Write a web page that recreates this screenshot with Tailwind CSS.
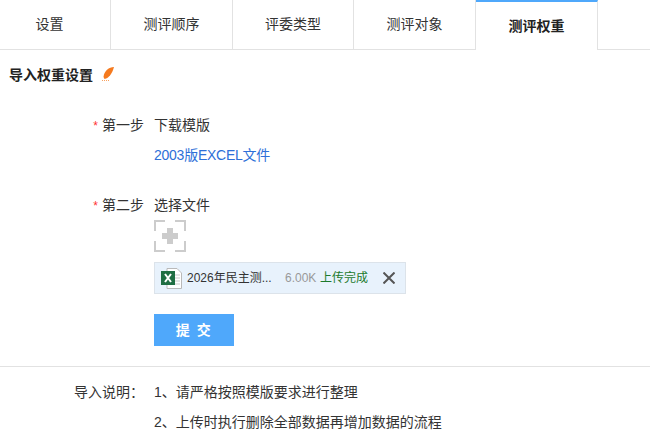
<!DOCTYPE html>
<html lang="zh-CN">
  <head>
    <meta charset="UTF-8" />
    <title>测评权重</title>
    <script src="https://cdn.jsdelivr.net/npm/@tailwindcss/browser@4"></script>
  </head>
  <body class="w-[650px] h-[440px] overflow-hidden bg-white text-[14px] text-[#333] font-['Liberation_Sans','Noto_Sans_CJK_SC',sans-serif]">
    <!-- Tabs -->
    <div class="flex h-[50px] border-b border-[#e2e2e2] text-[#333]">
      <div class="w-[111px] flex items-center justify-center border-r border-[#e2e2e2] pr-[11px]">设置</div>
      <div class="w-[122px] flex items-center justify-center border-r border-[#e2e2e2]">测评顺序</div>
      <div class="w-[121px] flex items-center justify-center border-r border-[#e2e2e2]">评委类型</div>
      <div class="w-[122px] flex items-center justify-center border-r border-[#e2e2e2]">测评对象</div>
      <div class="w-[122px] h-[50px] flex items-center justify-center bg-white border-t-2 border-r border-t-[#4fa8fb] border-r-[#e2e2e2] font-bold text-[#222]">测评权重</div>
    </div>

    <!-- Title -->
    <div class="flex items-center pl-[9px] h-[50px]">
      <h2 class="font-bold text-[#222]">导入权重设置</h2>
      <svg class="ml-[8px] mb-[2px]" width="14" height="16" viewBox="0 0 14 16">
        <path d="M13 1 C8 1 3 5 2.500 11 L3.500 13 C8 12 11 8 13 1Z" fill="#f57a1f" />
        <path d="M1 14.500H9" stroke="#f9a25f" stroke-width="1" stroke-dasharray="1 1" />
      </svg>
    </div>

    <!-- Form -->
    <div class="pt-[15px]">
      <div class="flex">
        <div class="w-[144px] text-right leading-[20px]"><span class="text-[#f33] text-[12px] mr-[4px]">*</span>第一步</div>
        <div class="pl-[10px]">
          <div class="leading-[20px]">下载模版</div>
          <a class="block mt-[10px] leading-[20px] text-[#2e6fd8] tracking-[-0.250px]">2003版EXCEL文件</a>
        </div>
      </div>

      <div class="flex mt-[30px]">
        <div class="w-[144px] text-right leading-[20px]"><span class="text-[#f33] text-[12px] mr-[4px]">*</span>第二步</div>
        <div class="pl-[10px]">
          <div class="leading-[20px]">选择文件</div>
          <svg class="mt-[5px] block" width="32" height="32" viewBox="0 0 32 32">
            <path d="M1 11V1H11M21 1H31V11M31 21V31H21M11 31H1V21" fill="none" stroke="#ccc" stroke-width="2" />
            <path d="M13 8H19V13H24V19H19V24H13V19H8V13H13Z" fill="#ccc" />
          </svg>
          <div class="mt-[10px] w-[252px] h-[32px] flex items-center pl-[6px] bg-[#e8f2fc] border border-[#dce3ea] text-[12px] whitespace-nowrap">
            <svg class="shrink-0" width="21" height="21" viewBox="0 0 21 21">
              <path d="M6 0.500H16L20.500 5V20.500H6Z" fill="#fff" stroke="#b9b9b9" />
              <path d="M14 7H19M14 10H19M14 13H19M14 16H19" stroke="#c9c9c9" />
              <rect x="0" y="3" width="14" height="14" fill="#1f6e43" />
              <path d="M4 6L10 14M10 6L4 14" stroke="#fff" stroke-width="2" />
            </svg>
            <span class="ml-[5px] w-[90px] shrink-0 text-[#333]">2026年民主测...</span>
            <span class="ml-[8px] w-[35px] shrink-0 text-[#999]">6.00K</span>
            <span class="text-[#1d7a2d]">上传完成</span>
            <svg class="ml-[15px] shrink-0" width="12" height="12" viewBox="0 0 12 12">
              <path d="M0.500 0.500L11.500 11.500M11.500 0.500L0.500 11.500" stroke="#555" stroke-width="2" />
            </svg>
          </div>
          <button class="block mt-[20px] w-[80px] h-[32px] bg-[#4fa8fb] text-white font-bold tracking-[1.500px]">提 交</button>
        </div>
      </div>
    </div>

    <!-- Notes -->
    <div class="mt-[20px] border-t border-[#e2e2e2] pt-[15px] flex">
      <div class="w-[144px] text-right leading-[20px]">导入说明：</div>
      <div class="pl-[10px] space-y-[10px]">
        <p class="leading-[20px]">1、请严格按照模版要求进行整理</p>
        <p class="leading-[20px]">2、上传时执行删除全部数据再增加数据的流程</p>
      </div>
    </div>
  </body>
</html>
